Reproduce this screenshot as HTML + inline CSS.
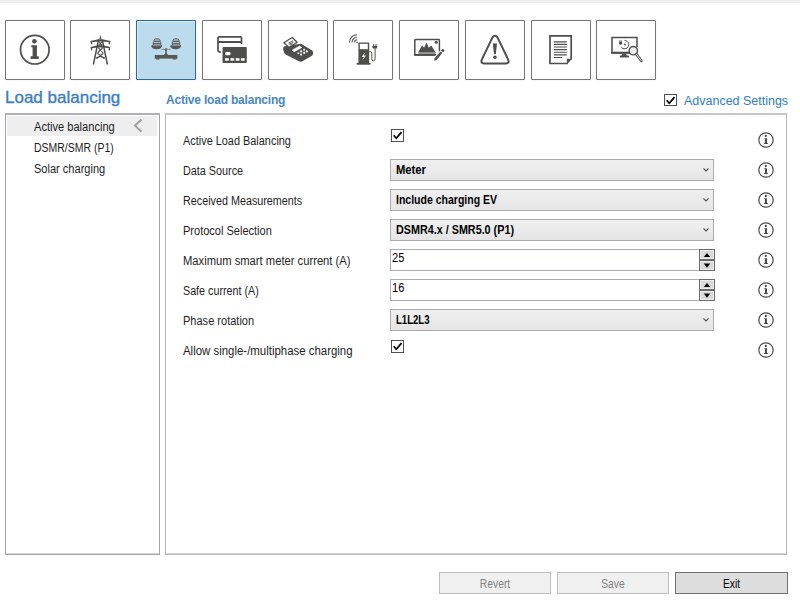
<!DOCTYPE html>
<html><head><meta charset="utf-8">
<style>
*{margin:0;padding:0;box-sizing:border-box}
html,body{width:800px;height:611px;overflow:hidden;background:#fff;font-family:"Liberation Sans",sans-serif;color:#1e1e1e}
.a{position:absolute}
.t{position:absolute;white-space:nowrap;line-height:11px;font-size:11px}
.s{font-size:12px;line-height:12px;transform-origin:0 0}
.strip{left:0;top:0;width:800px;height:3px;background:#eeeeee}
.tb{position:absolute;top:20px;width:60px;height:60px;border:1px solid #767676;background:#fff;border-radius:1px;box-shadow:0 0 1px rgba(0,0,0,0.25)}
.tb svg{position:absolute;left:-1px;top:-1px}
.tb.sel{background:#bcdbed;border-color:#336699;box-shadow:inset 1px 1px 0 #d4eefa,0 0 1px rgba(0,0,60,0.3)}
.panel{position:absolute;top:113px;height:442px;border:1px solid #a2a5aa;border-top:2px solid #aeb0b4;box-shadow:inset 0 -1px 0 #d4d6d9}
.dd{position:absolute;left:390px;width:324px;height:22px;border:1px solid #acacac;background:linear-gradient(#f0f0f0,#e5e5e5)}
.dd span{position:absolute;left:5px;top:3.5px;font-size:12px;line-height:12px;font-weight:bold;color:#000;white-space:nowrap;transform-origin:0 0}
.dd .chev{position:absolute;left:311px;top:7px}
.inp{position:absolute;left:390px;width:310px;height:22px;border:1px solid #abadb3;border-right:none;background:#fff}
.inp span{position:absolute;left:1px;top:2px;font-size:12px;line-height:12px;color:#000;transform:scaleX(0.92);transform-origin:0 0}
.spin{position:absolute;left:699px;width:16px;height:22px}
.spin div{position:absolute;left:0;width:16px;height:11px;border:1px solid #6a6a6a;background:#d9d9d9;box-shadow:inset 0 0 0 1px #ececec}
.cb{position:absolute;left:391px;width:13px;height:13px;border:1px solid #505050;background:#fff}
.info{position:absolute;left:758px;width:16px;height:16px}
.btn{position:absolute;top:572px;width:112px;height:22px;border:1px solid #bfbfbf;background:#f0f0f0;font-size:12px;line-height:12px;color:#838383;text-align:center}
.btn span{position:absolute;left:0;right:0;top:5px;transform:scaleX(0.86)}
</style></head><body>
<div class="a strip"></div>

<!-- toolbar -->
<div class="tb" style="left:5px"><svg width="60" height="60" viewBox="0 0 60 60"><circle cx="29.8" cy="29.7" r="14.3" fill="none" stroke="#4e4f4c" stroke-width="1.7"/><circle cx="29.4" cy="21.2" r="2.3" fill="#4e4f4c"/><path d="M26.3 25.3H31.9V36.2H33.7V38.9H25.6V36.2H27.6V27.2H26.3Z" fill="#4e4f4c"/></svg></div>
<div class="tb" style="left:70px"><svg width="60" height="60" viewBox="0 0 60 60"><g fill="#4e4f4c"><path d="M30.4 15L31.4 19H29.4Z"/><path d="M20.4 21.1L28.6 19.2H32.2L40.4 21.1V22.3L32.2 21.4H28.6L20.4 22.3Z"/><path d="M20.6 27.1L28.2 25.3H32.6L40.2 27.1V28.3L32.6 27.4H28.2L20.6 28.3Z"/><rect x="20.9" y="22" width="1.3" height="2.3"/><rect x="38.7" y="22" width="1.3" height="2.3"/><rect x="20.9" y="28" width="1.3" height="2.4"/><rect x="38.7" y="28" width="1.3" height="2.4"/></g><g fill="none" stroke="#4e4f4c"><path d="M28.6 19.3L23.4 44.5M32.2 19.3L37.4 44.5" stroke-width="1.5"/><path d="M28.7 21.5L32 25.4M32.1 21.5L28.8 25.4M28.1 27.5L33.2 33M32.7 27.5L27.5 33M27.4 33.3L34.2 38.5M33.4 33.3L26.6 38.5M25.8 38.3Q30.4 35 35 38.3" stroke-width="1.1"/></g></svg></div>
<div class="tb sel" style="left:136px"><svg width="60" height="60" viewBox="0 0 60 60"><g fill="#575856"><path d="M15.1 25.6H26.1C26 28 24 29.3 20.6 29.3C17.2 29.3 15.2 28 15.1 25.6Z"/><path d="M34.1 25.6H45.1C45 28 43 29.3 39.6 29.3C36.2 29.3 34.2 28 34.1 25.6Z"/><path d="M18.8 35H41.4V38.6H18.8Z"/><path d="M20 38.3h3.5v1.2h-3.5zM36.8 38.3h3.5v1.2h-3.5z"/><circle cx="30" cy="29.5" r="1.3"/><path d="M29.3 29.5h1.4v3.8l1.5 1.8h-4.4l1.5-1.8z"/></g><path d="M25.5 29.4H34.5" stroke="#777" stroke-width="0.8"/><g fill="#a9c2d2" stroke="#5a5b59" stroke-width="1"><path d="M17.8 21.3C17.8 19.5 18.8 18.8 21 18.8S24.2 19.5 24.2 21.3Z"/><path d="M17 23.8C17 22 17.6 21.4 21 21.4S25 22 25 23.8Z"/><path d="M16.5 26C16.5 24.4 17.4 23.9 21 23.9S25.5 24.4 25.5 26Z"/><path d="M36.8 21.3C36.8 19.5 37.8 18.8 40 18.8S43.2 19.5 43.2 21.3Z"/><path d="M36 23.8C36 22 36.6 21.4 40 21.4S44 22 44 23.8Z"/><path d="M35.5 26C35.5 24.4 36.4 23.9 40 23.9S44.5 24.4 44.5 26Z"/></g></svg></div>
<div class="tb" style="left:202px"><svg width="60" height="60" viewBox="0 0 60 60"><path d="M18.8 32.2Q16 32.2 16 30V17.8Q16 16.9 17 16.9H38.6Q39.5 16.9 39.5 17.8V24" fill="none" stroke="#4e4f4c" stroke-width="1.7"/><rect x="16" y="21" width="23.5" height="2" fill="#4e4f4c"/><rect x="20.5" y="27" width="24.3" height="16" rx="1" fill="#4e4f4c"/><rect x="23" y="32" width="5.6" height="3.2" rx="1.4" fill="#fff"/><g fill="#fff"><rect x="23" y="38.2" width="3.8" height="2.5"/><rect x="28.4" y="38.2" width="3.8" height="2.5"/><rect x="33.7" y="38.2" width="3.8" height="2.5"/><rect x="38.9" y="38.2" width="3.8" height="2.5"/></g></svg></div>
<div class="tb" style="left:268px"><svg width="60" height="60" viewBox="1 0 60 60"><path d="M17.5 26.2Q15.8 27 16.2 29.5L17 32.6Q17.5 34 19 34.7L32 41.3Q33.5 42 35 41.4L44.5 36Q46 35 46 33.4V32Q46 30.8 44.8 30.2L34.5 24Q33.5 23.5 32.5 24Z" fill="#4e4f4c"/><path d="M16.8 22.7L25.2 17.5L30.1 22.2L22.3 27.4Z" fill="#fff" stroke="#4e4f4c" stroke-width="1.3" stroke-linejoin="round"/><path d="M21.3 23L26 20.8M21.8 24.3L26.5 22.1M22.8 25.2L25.6 23.9" stroke="#4e4f4c" stroke-width="0.9"/><path d="M25 30.2L32.6 26L34.9 27.5L27.2 31.7Z" fill="#fff" stroke="#fff" stroke-width="0.6" stroke-linejoin="round"/><g fill="#fff"><circle cx="37.1" cy="29.7" r="1.05"/><circle cx="39.8" cy="31.4" r="1.05"/><circle cx="34.1" cy="31.4" r="1.05"/><circle cx="37.1" cy="32.9" r="1.05"/><circle cx="31.4" cy="33.2" r="1.05"/><circle cx="34.1" cy="34.6" r="1.05"/></g></svg></div>
<div class="tb" style="left:333px"><svg width="60" height="60" viewBox="0 0 60 60"><path d="M25.4 23.4Q25.4 22.4 26.4 22.4H35.2Q36.2 22.4 36.2 23.4V43.4H25.4Z" fill="#4e4f4c"/><rect x="23.7" y="42.9" width="13.8" height="1.8" fill="#4e4f4c"/><rect x="26.8" y="23.8" width="8" height="5.4" fill="#fff"/><path d="M32.2 32.2L28.6 36.9H30.9L29.2 40.6L33 35.6H30.8Z" fill="#fff"/><path d="M36.2 31.8H37.8Q38.8 31.8 38.8 33V38.8Q38.8 40.9 40.4 40.9Q42.1 40.9 42.1 38.8V28.3" fill="none" stroke="#4e4f4c" stroke-width="1"/><rect x="39.5" y="25.7" width="4.6" height="2.7" rx="0.6" fill="#4e4f4c"/><path d="M40.6 24V26M43 24V26" stroke="#4e4f4c" stroke-width="0.9"/><g fill="none" stroke="#4e4f4c" stroke-width="1.1"><path d="M21.6 22.4A2.6 2.6 0 0 1 24.2 19.8"/><path d="M19 22.4A5.2 5.2 0 0 1 24.2 17.2"/><path d="M16.5 22.4A7.7 7.7 0 0 1 24.2 14.7"/></g><circle cx="24.3" cy="22.3" r="0.8" fill="#4e4f4c"/></svg></div>
<div class="tb" style="left:399px"><svg width="60" height="60" viewBox="0 0 60 60"><path d="M40.4 31.5V20.2Q40.4 19.5 39.7 19.5H16.5Q15.8 19.5 15.8 20.2V34.9H37.5" fill="none" stroke="#4e4f4c" stroke-width="1.5"/><rect x="15.1" y="33.9" width="22.4" height="1.9" rx="0.5" fill="#4e4f4c"/><path d="M19.4 32.1L23 25.4L25.1 27.8L27.5 22.6L29.8 27.8L32.4 25.4L36.2 32.1Z" fill="#4e4f4c"/><rect x="19.2" y="32" width="17.6" height="1.9" fill="#8f8f8f"/><circle cx="37.3" cy="22.2" r="1.5" fill="#4e4f4c"/><path d="M34.3 41.6L41.6 32.6" stroke="#fff" stroke-width="4.2"/><path d="M35.2 40.8L35.6 38.3L41.4 31.4L43.3 33L37.5 39.9Z" fill="#4e4f4c"/><path d="M42 30.7L43.3 29.2Q43.8 28.7 44.3 29.1L45.3 30Q45.7 30.4 45.3 30.9L44 32.4Z" fill="#4e4f4c"/></svg></div>
<div class="tb" style="left:465px"><svg width="60" height="60" viewBox="1 0 60 60"><path d="M28.4 17.6Q31 13.8 33.6 17.6L44.2 39.6Q45.6 43.4 42 43.4H20Q16.4 43.4 17.8 39.6Z" fill="none" stroke="#4e4f4c" stroke-width="2" stroke-linejoin="round"/><path d="M28.8 23.4H33L31.8 34.2H30Z" fill="#4e4f4c"/><circle cx="30.9" cy="37.2" r="1.8" fill="#4e4f4c"/></svg></div>
<div class="tb" style="left:531px"><svg width="60" height="60" viewBox="1 0 60 60"><path d="M37.6 43.5H20V15.8H41.2V39.6" fill="none" stroke="#4e4f4c" stroke-width="1.7"/><path d="M42.1 38.8L36.8 44.4V38.8Z" fill="#4e4f4c"/><g stroke="#4e4f4c" stroke-width="1.15"><path d="M24 21.8H36.8M24 24.4H36.8M24 27H36.8M24 29.6H36.8M24 32.2H36.8M24 34.8H36.8M24 37.5H31.9"/></g></svg></div>
<div class="tb" style="left:596px"><svg width="60" height="60" viewBox="0 0 60 60"><path d="M16 33V17.5H41V27" fill="none" stroke="#4e4f4c" stroke-width="1.5"/><rect x="15.2" y="31.7" width="20" height="2.2" fill="#4e4f4c"/><path d="M26.3 33.9H30.2L30.8 35.6H32.9V37.6H23.8V35.6H25.7Z" fill="#4e4f4c"/><path d="M23.1 21.5H26V23.5Q26 24.8 24.5 24.8Q23.1 24.8 23.1 23.5Z" fill="#4e4f4c"/><path d="M23.8 20.2V21.5M25.3 20.2V21.5" stroke="#4e4f4c" stroke-width="0.7"/><path d="M28.7 20.4A4.2 4.2 0 1 1 25.3 27.2" fill="none" stroke="#4e4f4c" stroke-width="1"/><path d="M29.6 22.2L27.7 25H29L28.4 27L30.3 24.2H29Z" fill="#4e4f4c"/><circle cx="37.3" cy="30.7" r="4.2" fill="#eeeeee" stroke="#4e4f4c" stroke-width="1.4"/><path d="M40.3 34.1L45.4 40.9" stroke="#4e4f4c" stroke-width="2.6" stroke-linecap="round"/><path d="M40.4 34.3L45.1 40.5" stroke="#fff" stroke-width="1" stroke-linecap="round"/></svg></div>

<!-- headings -->
<div class="t" style="left:5px;top:89px;font-size:17px;line-height:17px;color:#3a7dc0;-webkit-text-stroke:0.35px #3a7dc0">Load balancing</div>
<div class="t" style="left:166px;top:94px;font-size:12px;line-height:12px;font-weight:bold;letter-spacing:-0.2px;color:#4a86c0">Active load balancing</div>
<div class="cb" style="left:664px;top:94px;height:12px"><svg width="13" height="13" viewBox="0 0 13 13" style="position:absolute;left:-1px;top:-1px"><path d="M2.7 6.3L5.3 9.3L10.5 3.1" fill="none" stroke="#000" stroke-width="1.7"/></svg></div>
<div class="t" style="left:684px;top:93.5px;font-size:13px;line-height:13px;color:#2f7dc4;transform:scaleX(0.96);transform-origin:0 0">Advanced Settings</div>

<!-- left panel -->
<div class="panel" style="left:5px;width:155px"></div>
<div class="a" style="left:7px;top:116px;width:150px;height:20px;background:#eeeeee"></div>
<div class="t s" style="left:34px;top:121px;transform:scaleX(0.924)">Active balancing</div>
<div class="t s" style="left:34px;top:142px;transform:scaleX(0.873)">DSMR/SMR (P1)</div>
<div class="t s" style="left:34px;top:162.5px;transform:scaleX(0.920)">Solar charging</div>

<!-- main panel -->
<div class="panel" style="left:165px;width:622px;border-color:#b4b7bb;border-top-color:#c4c6c9"></div>

<div class="t s" style="left:183px;top:135px;transform:scaleX(0.909)">Active Load Balancing</div>
<div class="t s" style="left:183px;top:165px;transform:scaleX(0.900)">Data Source</div>
<div class="t s" style="left:183px;top:195px;transform:scaleX(0.898)">Received Measurements</div>
<div class="t s" style="left:183px;top:225px;transform:scaleX(0.918)">Protocol Selection</div>
<div class="t s" style="left:183px;top:255px;transform:scaleX(0.934)">Maximum smart meter current (A)</div>
<div class="t s" style="left:183px;top:285px;transform:scaleX(0.894)">Safe current (A)</div>
<div class="t s" style="left:183px;top:315px;transform:scaleX(0.919)">Phase rotation</div>
<div class="t s" style="left:183px;top:345px;transform:scaleX(0.952)">Allow single-/multiphase charging</div>

<div class="cb" style="top:129px"><svg width="13" height="13" viewBox="0 0 13 13" style="position:absolute;left:-1px;top:-1px"><path d="M2.7 6.3L5.3 9.3L10.5 3.1" fill="none" stroke="#000" stroke-width="1.7"/></svg></div>
<div class="dd" style="top:159px"><span style="transform:scaleX(0.937)">Meter</span><svg class="chev" width="8" height="6" viewBox="0 0 8 6"><path d="M1.5 1.5L4 4L6.5 1.5" fill="none" stroke="#555" stroke-width="1.1"/></svg></div>
<div class="dd" style="top:189px"><span style="transform:scaleX(0.876)">Include charging EV</span><svg class="chev" width="8" height="6" viewBox="0 0 8 6"><path d="M1.5 1.5L4 4L6.5 1.5" fill="none" stroke="#555" stroke-width="1.1"/></svg></div>
<div class="dd" style="top:219px"><span style="transform:scaleX(0.898)">DSMR4.x / SMR5.0 (P1)</span><svg class="chev" width="8" height="6" viewBox="0 0 8 6"><path d="M1.5 1.5L4 4L6.5 1.5" fill="none" stroke="#555" stroke-width="1.1"/></svg></div>
<div class="inp" style="top:249px"><span>25</span></div>
<div class="spin" style="top:249px"><div style="top:0"><svg width="14" height="9" viewBox="0 0 14 9" style="position:absolute;left:0;top:0"><path d="M3.8 7L7 3L10.2 7Z" fill="#000"/></svg></div><div style="top:11px"><svg width="14" height="9" viewBox="0 0 14 9" style="position:absolute;left:0;top:0"><path d="M3.8 2.6L7 6.8L10.2 2.6Z" fill="#000"/></svg></div></div>
<div class="inp" style="top:279px"><span>16</span></div>
<div class="spin" style="top:279px"><div style="top:0"><svg width="14" height="9" viewBox="0 0 14 9" style="position:absolute;left:0;top:0"><path d="M3.8 7L7 3L10.2 7Z" fill="#000"/></svg></div><div style="top:11px"><svg width="14" height="9" viewBox="0 0 14 9" style="position:absolute;left:0;top:0"><path d="M3.8 2.6L7 6.8L10.2 2.6Z" fill="#000"/></svg></div></div>
<div class="dd" style="top:309px"><span style="transform:scaleX(0.797)">L1L2L3</span><svg class="chev" width="8" height="6" viewBox="0 0 8 6"><path d="M1.5 1.5L4 4L6.5 1.5" fill="none" stroke="#555" stroke-width="1.1"/></svg></div>
<div class="cb" style="top:340px"><svg width="13" height="13" viewBox="0 0 13 13" style="position:absolute;left:-1px;top:-1px"><path d="M2.7 6.3L5.3 9.3L10.5 3.1" fill="none" stroke="#000" stroke-width="1.7"/></svg></div>

<svg class="a" style="left:756px;top:129.5px" width="20" height="20" viewBox="0 0 20 20"><circle cx="10" cy="10" r="7.2" fill="none" stroke="#4a4a4a" stroke-width="1.2"/><circle cx="9.8" cy="6" r="1.15" fill="#4a4a4a"/><path d="M8.3 8.2H11V12.9H11.9V14.1H8V12.9H8.9V9.1H8.3Z" fill="#4a4a4a"/></svg>
<svg class="a" style="left:756px;top:159.5px" width="20" height="20" viewBox="0 0 20 20"><circle cx="10" cy="10" r="7.2" fill="none" stroke="#4a4a4a" stroke-width="1.2"/><circle cx="9.8" cy="6" r="1.15" fill="#4a4a4a"/><path d="M8.3 8.2H11V12.9H11.9V14.1H8V12.9H8.9V9.1H8.3Z" fill="#4a4a4a"/></svg>
<svg class="a" style="left:756px;top:189.5px" width="20" height="20" viewBox="0 0 20 20"><circle cx="10" cy="10" r="7.2" fill="none" stroke="#4a4a4a" stroke-width="1.2"/><circle cx="9.8" cy="6" r="1.15" fill="#4a4a4a"/><path d="M8.3 8.2H11V12.9H11.9V14.1H8V12.9H8.9V9.1H8.3Z" fill="#4a4a4a"/></svg>
<svg class="a" style="left:756px;top:219.5px" width="20" height="20" viewBox="0 0 20 20"><circle cx="10" cy="10" r="7.2" fill="none" stroke="#4a4a4a" stroke-width="1.2"/><circle cx="9.8" cy="6" r="1.15" fill="#4a4a4a"/><path d="M8.3 8.2H11V12.9H11.9V14.1H8V12.9H8.9V9.1H8.3Z" fill="#4a4a4a"/></svg>
<svg class="a" style="left:756px;top:249.5px" width="20" height="20" viewBox="0 0 20 20"><circle cx="10" cy="10" r="7.2" fill="none" stroke="#4a4a4a" stroke-width="1.2"/><circle cx="9.8" cy="6" r="1.15" fill="#4a4a4a"/><path d="M8.3 8.2H11V12.9H11.9V14.1H8V12.9H8.9V9.1H8.3Z" fill="#4a4a4a"/></svg>
<svg class="a" style="left:756px;top:279.5px" width="20" height="20" viewBox="0 0 20 20"><circle cx="10" cy="10" r="7.2" fill="none" stroke="#4a4a4a" stroke-width="1.2"/><circle cx="9.8" cy="6" r="1.15" fill="#4a4a4a"/><path d="M8.3 8.2H11V12.9H11.9V14.1H8V12.9H8.9V9.1H8.3Z" fill="#4a4a4a"/></svg>
<svg class="a" style="left:756px;top:309.5px" width="20" height="20" viewBox="0 0 20 20"><circle cx="10" cy="10" r="7.2" fill="none" stroke="#4a4a4a" stroke-width="1.2"/><circle cx="9.8" cy="6" r="1.15" fill="#4a4a4a"/><path d="M8.3 8.2H11V12.9H11.9V14.1H8V12.9H8.9V9.1H8.3Z" fill="#4a4a4a"/></svg>
<svg class="a" style="left:756px;top:339.5px" width="20" height="20" viewBox="0 0 20 20"><circle cx="10" cy="10" r="7.2" fill="none" stroke="#4a4a4a" stroke-width="1.2"/><circle cx="9.8" cy="6" r="1.15" fill="#4a4a4a"/><path d="M8.3 8.2H11V12.9H11.9V14.1H8V12.9H8.9V9.1H8.3Z" fill="#4a4a4a"/></svg>
<!-- nav chevron -->
<svg class="a" style="left:130px;top:116px" width="16" height="20" viewBox="0 0 16 20"><path d="M11.5 3.5L5 9.6L11.5 15.8" fill="none" stroke="#a0a0a0" stroke-width="2"/></svg>
<!-- buttons -->
<div class="btn" style="left:439px"><span>Revert</span></div>
<div class="btn" style="left:557px"><span>Save</span></div>
<div class="btn" style="left:675px;width:113px;background:#dddddd;border-color:#707070;color:#000"><span>Exit</span></div>
</body></html>
